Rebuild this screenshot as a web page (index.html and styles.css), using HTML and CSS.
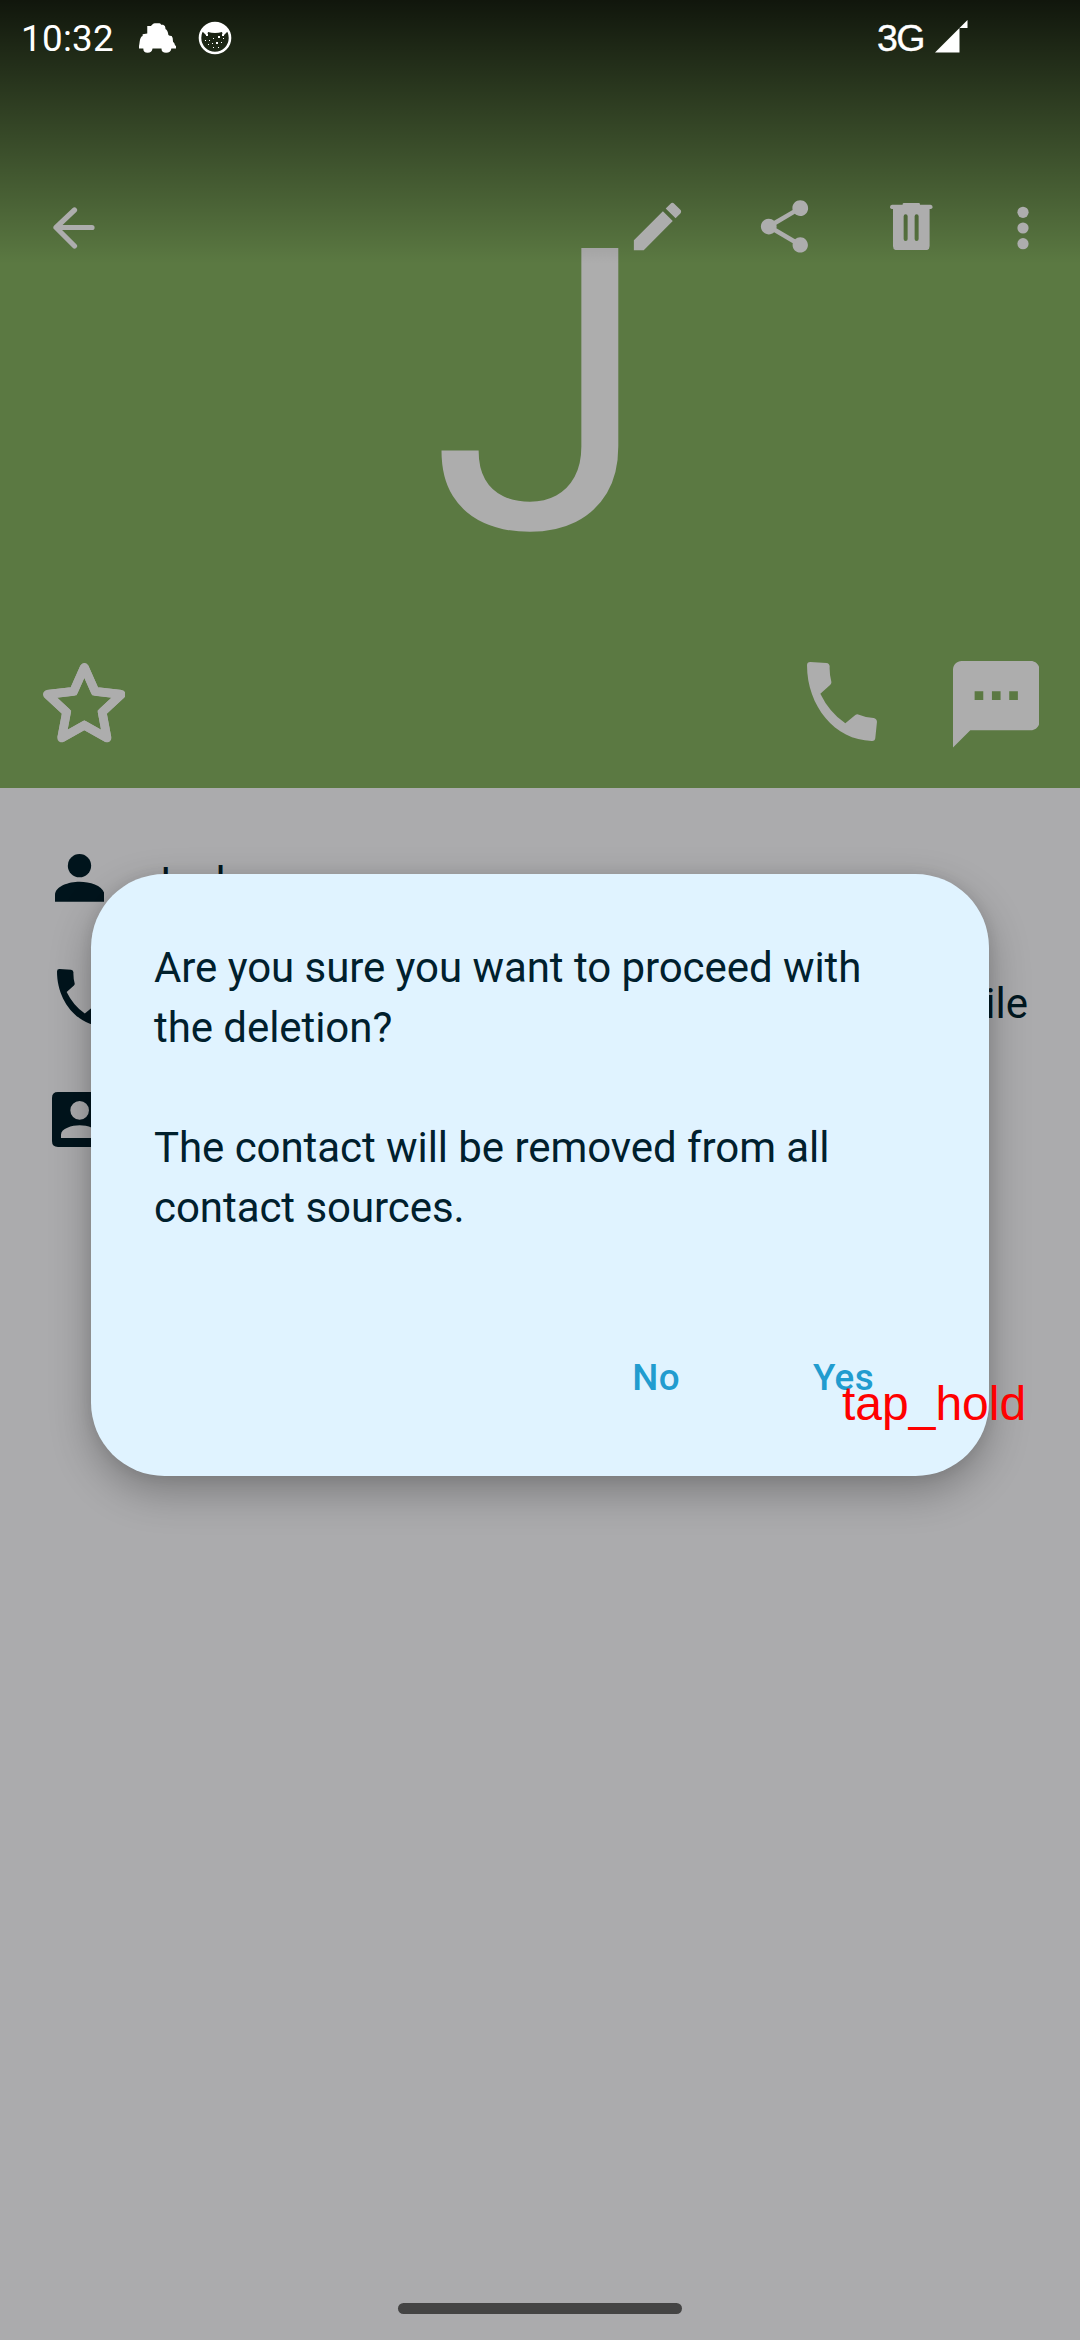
FILE: index.html
```html
<!DOCTYPE html>
<html lang="en">
<head>
<meta charset="utf-8">
<title>Contact</title>
<link rel="stylesheet" href="styles.css">
</head>
<body>
<svg class="defs" width="0" height="0">
  <symbol id="phone" viewBox="141 96 210 238">
    <path d="M141 106Q141 96 151 96L199 99Q208 100 209 109Q208 132 214 155Q215 160 211 164L181 191Q208 247 256 280L286 255Q291 251 297 254Q318 263 341 264Q350 266 351 275L346 324Q345 334 335 333C225 331 141 228 141 106Z"/>
  </symbol>
</svg>
<div class="screen">
  <header class="header">
    <div class="letter">J</div>
    <div class="scrim"></div>
    <div class="header-content">
      <div class="status">
        <span class="time">10:32</span>
        <svg class="car" viewBox="416 69 112 90"><path d="M458 72Q460 69 464 69H478Q482 69 483 74H489Q496 77 496 84V87Q503 90 505 105Q508 108 515 108Q519 112 519 125Q524 129 525 136L528 138V146H514Q512 159 498 159T484 146H457Q455 159 442 159T429 146H416V138Q417 134 418 125Q420 110 427 108V103L441 100V78H452Z"/></svg>
        <svg class="badge" viewBox="0 0 34 34"><circle class="ring" cx="17" cy="17" r="15"/><path d="M4 10Q9 2 17 2t13 8l-5 5-1-4q-7 2-14 0l-1 4z"/><path d="M8 13h2v2H8zM24 13h2v2h-2zM11 19h1v1h-1zM15 17h1v1h-1zM20 15h2v2h-2zM18 21h2v2h-2zM14 22h1v1h-1zM10 23h1v1h-1zM23 21h1v1h-1zM25 17h1v1h-1zM15 26h1v1h-1zM20 26h1v1h-1zM7 19h1v1H7z"/></svg>
        <span class="network">3G</span>
        <svg class="signal" viewBox="0 0 33 33"><path d="M0 32.500L24.500 8V32.500ZM24.500 8L32.500 0V8Z"/></svg>
      </div>
      <div class="toolbar">
        <svg class="icon back" viewBox="0 0 42 42"><path class="line" d="M21.500 3L3 20.500 21.500 39M4 20.500H39"/></svg>
        <svg class="icon edit" viewBox="0 0 24 24"><path d="M3 17.250V21h3.750L17.810 9.940l-3.750-3.750L3 17.250zM20.710 7.040c.39-.39.39-1.020 0-1.410l-2.340-2.340c-.39-.39-1.020-.39-1.410 0l-1.830 1.830 3.750 3.750 1.830-1.830z"/></svg>
        <svg class="icon share" viewBox="0 0 24 24"><path d="M18 16.080c-.76 0-1.440.3-1.960.77L8.910 12.700c.05-.23.09-.46.09-.7s-.04-.47-.09-.7l7.050-4.110c.54.5 1.250.81 2.040.81 1.660 0 3-1.340 3-3s-1.340-3-3-3-3 1.340-3 3c0 .24.04.47.09.7L8.040 9.810C7.500 9.310 6.790 9 6 9c-1.660 0-3 1.340-3 3s1.340 3 3 3c.79 0 1.500-.31 2.040-.81l7.120 4.160c-.05.21-.08.43-.08.65 0 1.610 1.310 2.920 2.920 2.920s2.920-1.310 2.920-2.920-1.310-2.920-2.920-2.920z"/></svg>
        <svg class="icon trash" viewBox="0 0 128 142"><path fill-rule="evenodd" d="M38 3Q38 0 42 0H86Q90 0 90 3V5H122Q128 6 128 12T119 18V129Q119 142 106 142H22Q9 142 9 129V18Q0 18 0 12T6 5H38ZM41 40V108Q41 114 47 114T53 108V40Q53 34 47 34T41 40ZM74 40V108Q74 114 80 114T86 108V40Q86 34 80 34T74 40Z"/></svg>
        <svg class="icon more" viewBox="0 0 12 44"><circle cx="6" cy="6.300" r="5.600"/><circle cx="6" cy="22" r="5.600"/><circle cx="6" cy="37.700" r="5.600"/></svg>
      </div>
      <div class="actions">
        <svg class="icon star" viewBox="128 99 248 239"><path d="M252 112L284 184 363 193 305.500 246.500 320 324 252 285.500 184 324 198.500 246.500 141 193 220 184Z"/><path class="round" d="M252 112L284 184 363 193 305.500 246.500 320 324 252 285.500 184 324 198.500 246.500 141 193 220 184Z"/></svg>
        <svg class="icon call"><use href="#phone"/></svg>
        <svg class="icon sms" viewBox="2 2 20 20"><path d="M20 2H4c-1.100 0-2 .9-2 2V22l4-4h14c1.100 0 2-.9 2-2V4c0-1.100-.9-2-2-2zM9 11H7V9h2v2zm4 0h-2V9h2v2zm4 0h-2V9h2v2z"/></svg>
      </div>
    </div>
  </header>
  <main class="details">
    <div class="row name">
      <svg class="person" viewBox="164 102 148 143"><circle cx="237.500" cy="137" r="35"/><path d="M164 245V224C164 199 205 185 238 185S312 199 312 224V245Z"/></svg>
      <span>Jack</span>
    </div>
    <div class="row number">
      <svg class="handset"><use href="#phone"/></svg>
      <span>Mobile</span>
    </div>
    <div class="row source">
      <svg class="card" viewBox="154 816 166 165"><path fill-rule="evenodd" d="M172 816H302Q320 816 320 834V963Q320 981 302 981H172Q154 981 154 963V834Q154 816 172 816ZM237 843A28 28 0 1 0 237 899 28 28 0 1 0 237 843ZM181 954H293V944C293 926 260 916 237 916S181 926 181 944Z"/></svg>
    </div>
  </main>
  <div class="home"></div>
  <div class="overlay">
    <section class="dialog" role="dialog">
      <div class="message">
        <p>Are you sure you want to proceed with the deletion?</p>
        <p>The contact will be removed from all contact sources.</p>
      </div>
      <div class="buttons"><span>No</span><span>Yes</span></div>
    </section>
  </div>
  <div class="gesture">tap_hold</div>
</div>
</body>
</html>
```

FILE: styles.css
```css
* { box-sizing: border-box; }
body { margin: 0; font-family: Roboto, "Liberation Sans", sans-serif; }
svg { display: block; flex: none; }
.defs { position: absolute; }
.screen {
  position: relative;
  display: flex;
  flex-direction: column;
  width: 1080px;
  height: 2340px;
  overflow: hidden;
  background: #ababad;
}
.header { display: grid; height: 788px; background: #5b7942; flex: none; }
.header > * { grid-area: 1 / 1; }
.letter {
  height: 788px;
  text-align: center;
  font-size: 394px;
  line-height: 786px;
  color: #adadad;
}
.scrim { height: 264px; background: linear-gradient(rgba(0,0,0,.82), rgba(0,0,0,0)); }
.header-content { display: flex; flex-direction: column; }
.status {
  display: flex;
  align-items: flex-start;
  height: 80px;
  padding: 17px 112px 0 21px;
  color: #fff;
  fill: #fff;
}
.time { width: 118px; font-size: 36.75px; line-height: 44px; letter-spacing: .3px; }
.car { width: 37px; height: 30px; margin-top: 6px; }
.badge { width: 34px; height: 34px; margin: 4px auto 0 22px; }
.ring { fill: none; stroke: #fff; stroke-width: 2.600; }
.network {
  font-family: "Liberation Sans", sans-serif;
  font-size: 37.5px;
  line-height: 42px;
  letter-spacing: -1.5px;
  -webkit-text-stroke: .4px #fff;
  margin-right: 11px;
}
.signal { width: 33px; height: 33px; margin-top: 3px; }
.icon { fill: #adadad; }
.toolbar {
  display: flex;
  align-items: center;
  height: 105px;
  margin-top: 95px;
  padding: 0 51.500px 0 53px;
}
.back { width: 42px; height: 42px; margin-right: auto; }
.line { fill: none; stroke: #adadad; stroke-width: 5.200; stroke-linecap: round; stroke-linejoin: round; }
.edit, .share { width: 63px; height: 63px; margin-top: -2px; }
.share { margin-left: 64px; }
.trash { width: 42.600px; height: 47.300px; margin: -2px 0 0 74.500px; }
.more { width: 12px; height: 44px; margin-left: 83.500px; }
.actions { display: flex; align-items: flex-start; margin-top: 381px; padding: 0 41px 0 42.700px; }
.star { width: 82.700px; height: 79.700px; margin: 2px auto 0 0; }
.star path { fill: none; stroke: #adadad; stroke-width: 26; stroke-miterlimit: 1.600; }
.star .round { stroke-linejoin: round; }
.call { width: 70px; height: 79.300px; margin-top: 1px; }
.sms { width: 86.500px; height: 86.500px; margin-left: 75.500px; }
.details {
  flex: 1;
  padding: 66px 52px 0;
  font-size: 42px;
  line-height: 50px;
  color: #001720;
  fill: #00141c;
}
.row { display: flex; justify-content: space-between; }
.name { height: 115px; justify-content: flex-start; }
.person { width: 49.300px; height: 47.700px; margin: 0 44px 0 2.500px; }
.name span { margin-top: 4px; }
.number { height: 123px; }
.handset { width: 50.800px; height: 57.600px; margin-left: 4.500px; }
.number span { margin-top: 10px; }
.card { width: 55.300px; height: 55px; margin-left: -.5px; }
.home { width: 284px; height: 11px; margin: 0 auto 26px; border-radius: 6px; background: #444; flex: none; }
.overlay {
  position: absolute;
  inset: 0;
  display: flex;
  align-items: center;
  justify-content: center;
  padding-top: 10px;
}
.dialog {
  display: flex;
  flex-direction: column;
  justify-content: space-between;
  width: 898px;
  height: 602px;
  padding: 64px 115px 70px 63px;
  border-radius: 73.5px;
  background: #e0f3ff;
  box-shadow: 0 16px 40px rgba(0,0,0,.28), 0 0 14px rgba(0,0,0,.08);
}
.message { width: 760px; font-size: 42px; line-height: 60px; letter-spacing: -.06px; color: #00202d; }
.message p { margin: 0 0 60px; }
.message p:last-child { margin: 0; }
.buttons {
  display: flex;
  justify-content: flex-end;
  gap: 133px;
  font-size: 36.750px;
  font-weight: 500;
  line-height: 56px;
  letter-spacing: .4px;
  color: #219ccf;
}
.gesture {
  position: absolute;
  left: 842px;
  top: 1376px;
  font: 48px/55px "Liberation Sans", sans-serif;
  color: #f00;
}
```
